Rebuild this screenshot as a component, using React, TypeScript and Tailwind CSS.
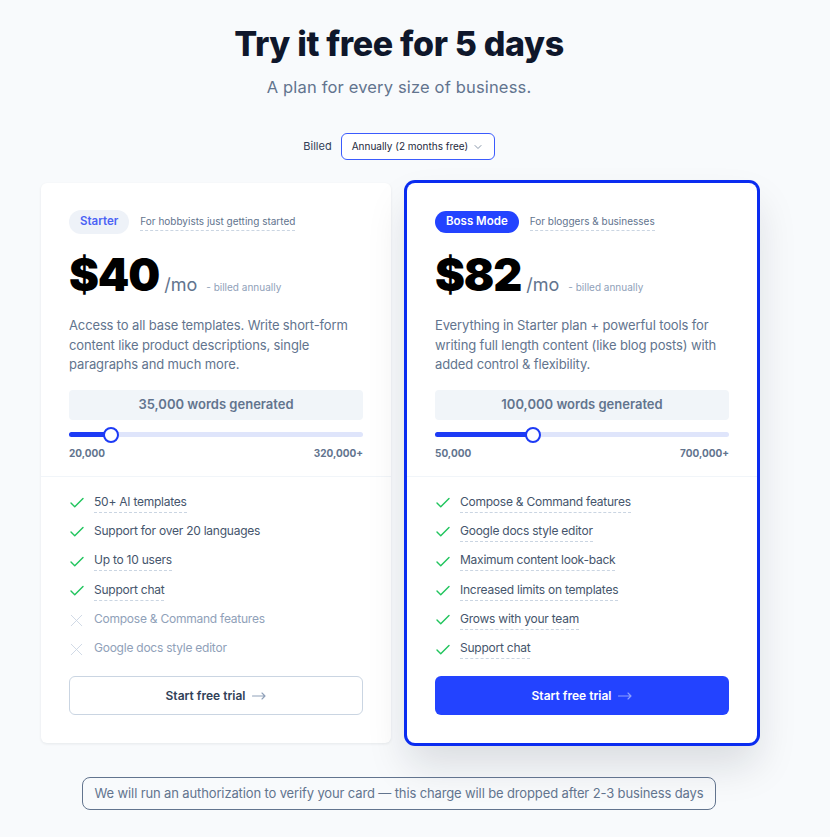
import React from 'react';
import { Check, X, ChevronDown } from 'lucide-react';

type Feature = { text: string; included: boolean; dashed: boolean };

interface PlanProps {
    name: string;
    tagline: string;
    price: string;
    description: string;
    words: string;
    min: string;
    max: string;
    percent: number;
    features: Feature[];
    featured?: boolean;
}

const Arrow = ({ className }: { className?: string }) => (
    <svg width="14" height="8" viewBox="0 0 14 8" fill="none" className={className}>
        <path d="M0.5 4H13M10 1L13 4L10 7" stroke="currentColor" strokeWidth="1.1" strokeLinecap="round" strokeLinejoin="round" />
    </svg>
);

const PlanCard: React.FC<PlanProps> = ({ name, tagline, price, description, words, min, max, percent, features, featured }) => {
    return (
        <div
            className={
                featured
                    ? 'w-[350px] bg-white rounded-lg ring-3 ring-[#0a2cf0] shadow-[0_22px_40px_rgba(15,23,42,0.13)]'
                    : 'w-[350px] bg-white rounded-md shadow-[0_1px_3px_rgba(15,23,42,0.08)]'
            }
        >
            <div className="px-7 pt-[27px] pb-4 border-b border-slate-100">
                <div className="flex items-center gap-[11px] h-6">
                    <span
                        className={
                            featured
                                ? 'h-[22px] px-[11px] rounded-full bg-[#2343ff] text-white text-[11.5px] font-semibold flex items-center'
                                : 'h-6 px-[11px] rounded-full bg-[#eef2f8] text-[#4b63f5] text-[11.5px] font-semibold flex items-center'
                        }
                    >
                        {name}
                    </span>
                    <span className="text-[10px] text-slate-500 border-b border-dashed border-slate-300 leading-4 pb-[1px]">{tagline}</span>
                </div>
                <div className="flex items-baseline mt-[19px]">
                    <span className="text-[45px] leading-[44px] font-black text-black tracking-tight">{price}</span>
                    <span className="text-lg text-slate-500 ml-[5px]">/mo</span>
                    <span className="text-[10px] text-slate-400 ml-[9px]">- billed annually</span>
                </div>
                <p className="mt-[17px] text-[13px] leading-[19.5px] text-slate-500 tracking-[-0.01em]">{description}</p>
                <div className="mt-[15px] h-[30px] rounded bg-slate-100 flex items-center justify-center text-[13px] font-semibold text-slate-500">
                    {words}
                </div>
                <div className="relative mt-[7px] h-4 flex items-center">
                    <div className="w-full h-[5px] rounded-full bg-[#dfe5fb]">
                        <div className="h-[5px] rounded-full bg-[#1d3bf5]" style={{ width: `${percent}%` }} />
                    </div>
                    <div
                        className="absolute top-0 w-4 h-4 -ml-2 rounded-full bg-white border-2 border-[#1d3bf5]"
                        style={{ left: `${percent}%` }}
                    />
                </div>
                <div className="mt-[3px] flex justify-between text-[10px] leading-[14px] font-bold text-slate-500">
                    <span>{min}</span>
                    <span>{max}</span>
                </div>
            </div>
            <div className="px-7 pt-[12px] pb-7">
                <ul>
                    {features.map((f, i) => (
                        <li key={i} className="h-[29.3px] flex items-center">
                            <span className="w-[25px] h-4 flex items-center">
                                {f.included ? (
                                    <Check size={18} strokeWidth={1.9} className="text-[#22c55e] -ml-[1px]" />
                                ) : (
                                    <X size={21} strokeWidth={1} className="text-slate-300 -ml-[3px]" />
                                )}
                            </span>
                            <span
                                className={
                                    'text-xs leading-4 pb-[2px] tracking-[-0.02em] border-b border-dashed ' +
                                    (f.dashed ? 'border-slate-300 ' : 'border-transparent ') +
                                    (f.included ? 'text-slate-600' : 'text-slate-400')
                                }
                            >
                                {f.text}
                            </span>
                        </li>
                    ))}
                </ul>
                <button
                    className={
                        featured
                            ? 'mt-[12px] w-full h-[39px] rounded-md bg-[#2343ff] text-white text-xs font-semibold flex items-center justify-center gap-[7px]'
                            : 'mt-[12px] w-full h-[39px] rounded-md border border-slate-300 bg-white text-slate-700 text-xs font-semibold flex items-center justify-center gap-[7px]'
                    }
                >
                    Start free trial
                    <Arrow className={featured ? 'text-[#8ea0ff]' : 'text-slate-400'} />
                </button>
            </div>
        </div>
    );
};

export default function App() {
    return (
        <div className="min-h-screen bg-[#f8fafc] font-['Inter',sans-serif] pr-[32px]">
            <div className="flex flex-col items-center pt-[24px] pb-8">
                <h1 className="text-[34px] leading-[40px] font-extrabold text-slate-900 tracking-[-0.01em]">Try it free for 5 days</h1>
                <p className="mt-[11px] text-[16.5px] leading-6 text-slate-500 tracking-[0.01em]">A plan for every size of business.</p>

                <div className="mt-[34px] flex items-center gap-[9px]">
                    <span className="text-[11px] text-slate-700">Billed</span>
                    <div className="h-[27px] w-[154px] rounded-md border border-[#3b5bfd] bg-white flex items-center justify-between pl-[10px] pr-[10px]">
                        <span className="text-[10px] text-slate-800 whitespace-nowrap">Annually (2 months free)</span>
                        <ChevronDown size={12} strokeWidth={1.5} className="text-slate-500" />
                    </div>
                </div>

                <div className="mt-[23px] flex items-start gap-4">
                    <PlanCard
                        name="Starter"
                        tagline="For hobbyists just getting started"
                        price="$40"
                        description="Access to all base templates. Write short-form content like product descriptions, single paragraphs and much more."
                        words="35,000 words generated"
                        min="20,000"
                        max="320,000+"
                        percent={14.2}
                        features={[
                            { text: '50+ AI templates', included: true, dashed: true },
                            { text: 'Support for over 20 languages', included: true, dashed: false },
                            { text: 'Up to 10 users', included: true, dashed: true },
                            { text: 'Support chat', included: true, dashed: true },
                            { text: 'Compose & Command features', included: false, dashed: false },
                            { text: 'Google docs style editor', included: false, dashed: false },
                        ]}
                    />
                    <PlanCard
                        featured
                        name="Boss Mode"
                        tagline="For bloggers & businesses"
                        price="$82"
                        description="Everything in Starter plan + powerful tools for writing full length content (like blog posts) with added control & flexibility."
                        words="100,000 words generated"
                        min="50,000"
                        max="700,000+"
                        percent={33.5}
                        features={[
                            { text: 'Compose & Command features', included: true, dashed: true },
                            { text: 'Google docs style editor', included: true, dashed: true },
                            { text: 'Maximum content look-back', included: true, dashed: true },
                            { text: 'Increased limits on templates', included: true, dashed: true },
                            { text: 'Grows with your team', included: true, dashed: true },
                            { text: 'Support chat', included: true, dashed: true },
                        ]}
                    />
                </div>

                <div className="mt-[34px] h-[33px] px-3 rounded-lg border border-slate-500 flex items-center text-[13px] tracking-[-0.01em] text-slate-500">
                    We will run an authorization to verify your card — this charge will be dropped after 2-3 business days
                </div>
            </div>
        </div>
    );
}
